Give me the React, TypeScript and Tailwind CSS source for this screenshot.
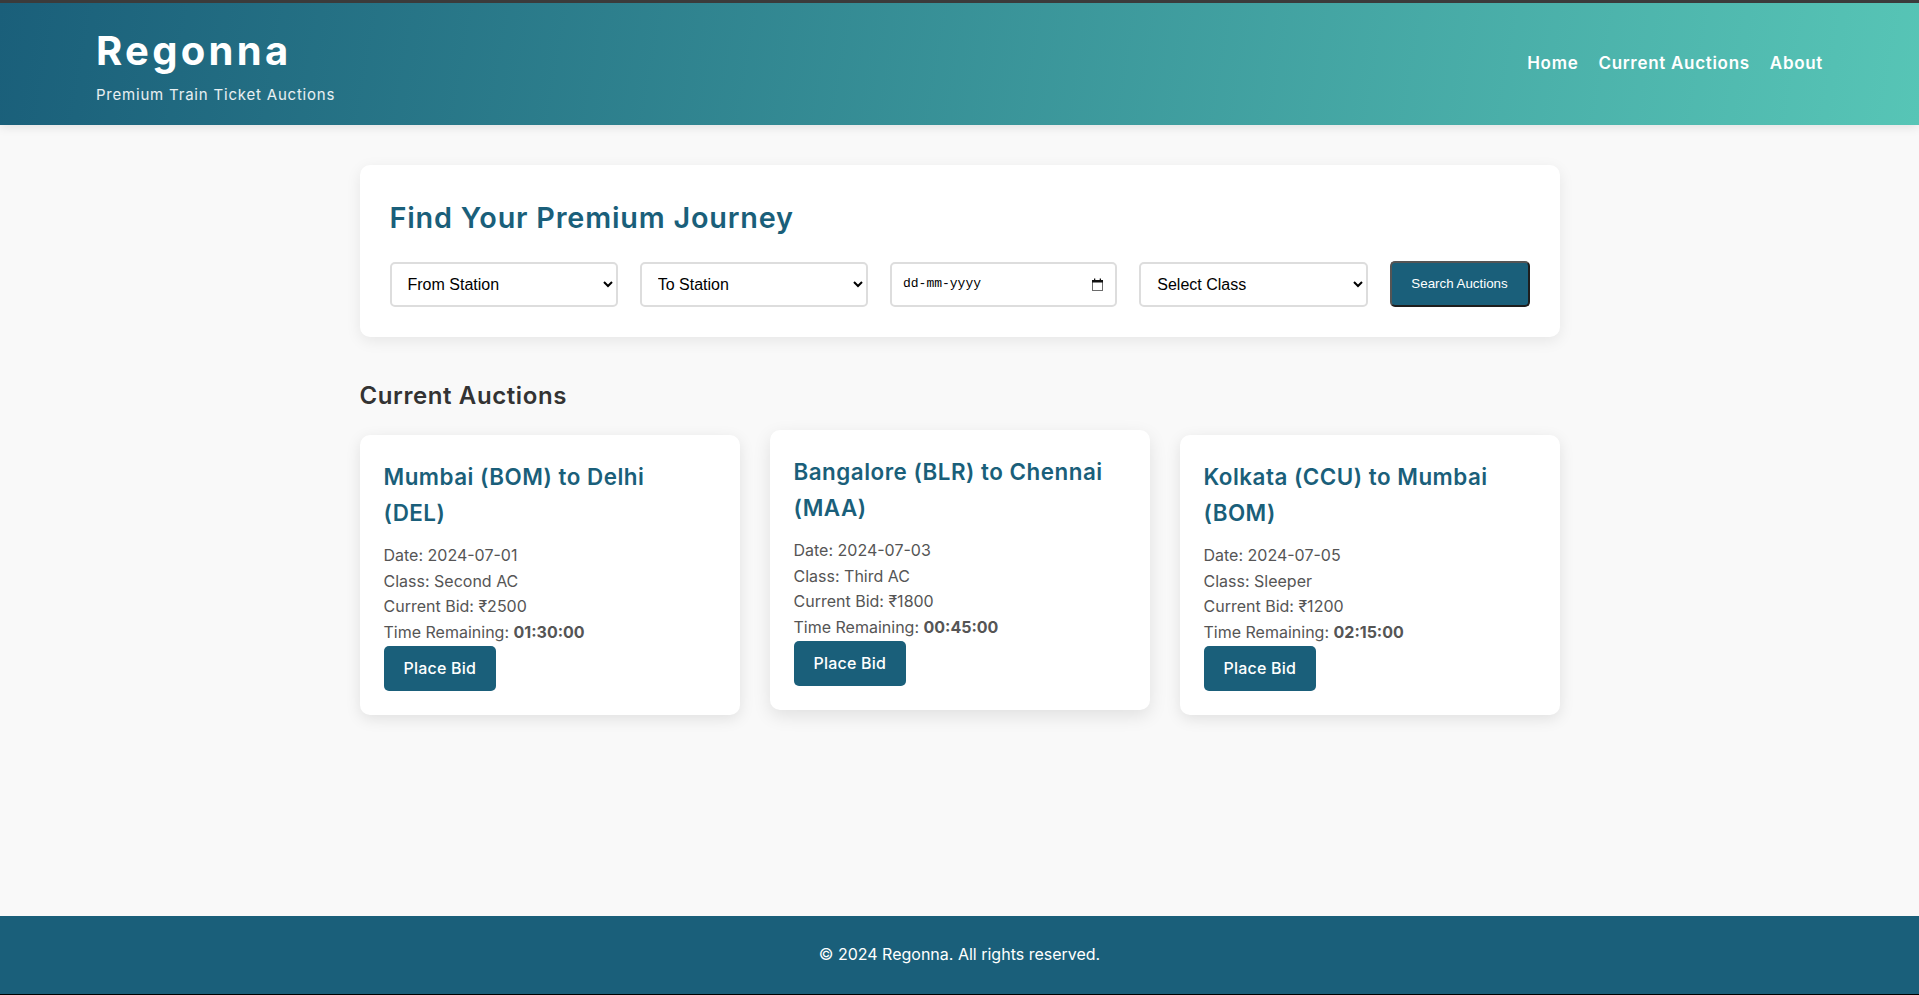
const auctions = [
  {
    route: 'Mumbai (BOM) to Delhi (DEL)',
    date: '2024-07-01',
    travelClass: 'Second AC',
    bid: '₹2500',
    remaining: '01:30:00',
    lifted: false,
  },
  {
    route: 'Bangalore (BLR) to Chennai (MAA)',
    date: '2024-07-03',
    travelClass: 'Third AC',
    bid: '₹1800',
    remaining: '00:45:00',
    lifted: true,
  },
  {
    route: 'Kolkata (CCU) to Mumbai (BOM)',
    date: '2024-07-05',
    travelClass: 'Sleeper',
    bid: '₹1200',
    remaining: '02:15:00',
    lifted: false,
  },
];

function Header() {
  return (
    <header className="border-t-[3px] border-[#3b3b3b] bg-[linear-gradient(100deg,#1a5f7a,#57c5b6)] px-[5%] pt-[24px] pb-[18px] text-white shadow-[0_2px_10px_rgba(0,0,0,0.1)]">
      <div className="flex items-start justify-between">
        <div>
          <h1 className="text-[40px] leading-[48px] font-bold tracking-[3.3px]">Regonna</h1>
          <p className="mt-2 text-[15px] leading-[24px] tracking-[0.8px] text-white/90">Premium Train Ticket Auctions</p>
        </div>
        <nav className="mt-[23px] flex gap-5 text-[17px] leading-[27px] font-semibold tracking-[0.7px]">
          <a href="#">Home</a>
          <a href="#">Current Auctions</a>
          <a href="#">About</a>
        </nav>
      </div>
    </header>
  );
}

function CalendarIcon() {
  return (
    <svg width="11" height="13" viewBox="0 0 11 13" className="shrink-0">
      <rect x="0.5" y="2.5" width="10" height="10" fill="none" stroke="#6b6b6b" />
      <rect x="0" y="2" width="11" height="2.5" fill="#111" />
      <rect x="2" y="0.5" width="1.3" height="2" fill="#111" />
      <rect x="7.7" y="0.5" width="1.3" height="2" fill="#111" />
    </svg>
  );
}

function SearchPanel() {
  const field =
    "h-[45px] min-w-0 flex-1 rounded-[5px] border-2 border-[#ddd] bg-white px-3 text-[16px] text-black font-['Liberation_Sans',Arial,sans-serif]";
  return (
    <section className="rounded-[10px] bg-white p-[30px] shadow-[0_4px_15px_rgba(0,0,0,0.08)]">
      <h2 className="mb-5 text-[28.8px] leading-[1.6] font-semibold tracking-[0.8px] text-[#1a5f7a]">
        Find Your Premium Journey
      </h2>
      <form className="flex items-center gap-[22px]" onSubmit={(e) => e.preventDefault()}>
        <select className={field} defaultValue="">
          <option value="">From Station</option>
        </select>
        <select className={field} defaultValue="">
          <option value="">To Station</option>
        </select>
        {/* date field */}
        <label className="flex h-[45px] min-w-0 flex-1 items-center rounded-[5px] border-2 border-[#ddd] bg-white pr-[12px] pl-[11px]">
          <input
            type="text"
            placeholder="dd-mm-yyyy"
            className="min-w-0 flex-1 text-[13px] text-black outline-none placeholder:text-black font-['Liberation_Mono',monospace]"
          />
          <CalendarIcon />
        </label>
        <select className={field} defaultValue="">
          <option value="">Select Class</option>
        </select>
        <button
          type="submit"
          className="h-[46px] w-[140px] shrink-0 rounded-[5px] border-2 border-t-[#555] border-l-[#555] border-r-[#1e1e1e] border-b-[#1e1e1e] bg-[#1a5f7a] text-[13.33px] text-white font-['Liberation_Sans',Arial,sans-serif]"
        >
          Search Auctions
        </button>
      </form>
    </section>
  );
}

function AuctionCard({ a }: { a: (typeof auctions)[number] }) {
  return (
    <div
      className={
        a.lifted
          ? 'rounded-[10px] bg-white p-6 shadow-[0_6px_18px_rgba(0,0,0,0.1)] -translate-y-[5px]'
          : 'rounded-[10px] bg-white p-6 shadow-[0_4px_15px_rgba(0,0,0,0.1)]'
      }
    >
      <h3 className="mb-3 max-w-[318px] text-[22.4px] leading-[1.6] font-semibold tracking-[0.5px] text-[#1a5f7a]">
        {a.route}
      </h3>
      <div className="text-[16px] leading-[1.6] text-[#555]">
        <p>Date: {a.date}</p>
        <p>Class: {a.travelClass}</p>
        <p>Current Bid: {a.bid}</p>
        <p>
          Time Remaining: <strong className="font-bold">{a.remaining}</strong>
        </p>
      </div>
      <button className="rounded-[5px] bg-[#1a5f7a] px-5 py-2.5 text-[16px] leading-[1.6] font-medium tracking-[0.2px] text-white">
        Place Bid
      </button>
    </div>
  );
}

export default function App() {
  return (
    <div className="flex min-h-screen flex-col bg-[#f9f9f9] font-['Inter','Noto_Sans',sans-serif] text-[#333]">
      <Header />

      <main className="flex-1 px-4 pt-10">
        <div className="mx-auto w-full max-w-[1200px]">
          <SearchPanel />

          {/* Auction listing */}
          <h2 className="mt-10 mb-5 text-[24px] leading-[1.6] font-semibold tracking-[0.6px] text-[#333]">
            Current Auctions
          </h2>
          <div className="grid grid-cols-3 items-start gap-[30px]">
            {auctions.map((a) => (
              <AuctionCard key={a.route} a={a} />
            ))}
          </div>
        </div>
      </main>

      <footer className="border-b border-black bg-[#1a5f7a] py-[26px] text-center text-[16px] leading-[1.6] text-white">
        © 2024 Regonna. All rights reserved.
      </footer>
    </div>
  );
}
